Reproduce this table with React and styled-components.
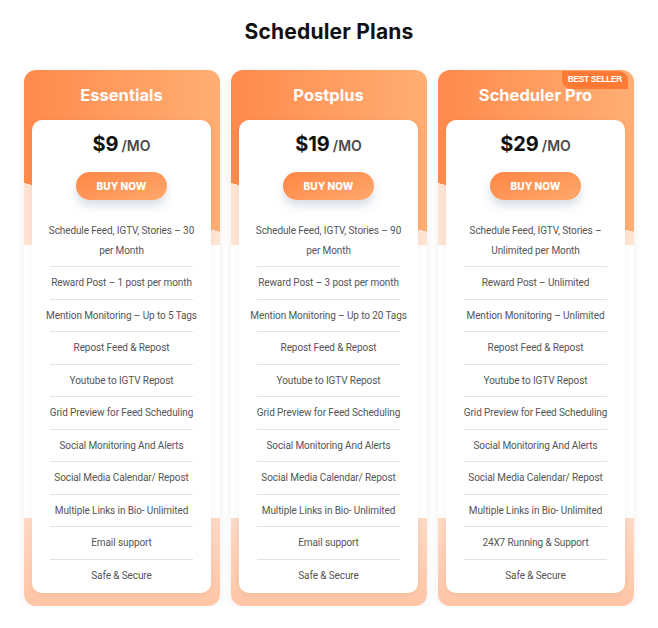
import styled, { createGlobalStyle } from 'styled-components';

const GlobalStyle = createGlobalStyle`
    body {
        margin: 0;
        background: #ffffff;
        font-family: Roboto, "Liberation Sans", sans-serif;
    }
`;

const Page = styled.div`
    width: 658px;
    padding: 18px 24px 0;
    box-sizing: border-box;
`;

const Heading = styled.h1`
    margin: 0 0 24px;
    text-align: center;
    font-family: Inter, "Noto Sans", sans-serif;
    font-size: 21px;
    font-weight: 700;
    line-height: 28px;
    color: #111;
    letter-spacing: 0.2px;
`;

const Grid = styled.div`
    display: grid;
    grid-template-columns: repeat(3, 196px);
    gap: 11px;
    align-items: start;
`;

const Card = styled.div`
    position: relative;
    display: flex;
    flex-direction: column;
    border-radius: 12px;
    overflow: hidden;
    padding: 0 9px 13px 8px;
    box-shadow: 0 2px 8px rgba(0, 0, 0, 0.07);
    background:
        linear-gradient(to bottom, transparent calc(100% - 88px), #ffd9c5 calc(100% - 88px), #ffc5a5 100%),
        linear-gradient(to bottom, transparent 0, transparent 175px, #ffffff 175px),
        linear-gradient(194deg, transparent 0, transparent 157px, #ffe3d3 157px),
        linear-gradient(to right, #ff8a4c, #ffae74);
`;

const CardTitle = styled.h2`
    margin: 0;
    height: 50px;
    display: flex;
    align-items: center;
    justify-content: center;
    font-family: Inter, "Noto Sans", sans-serif;
    font-size: 16.5px;
    font-weight: 700;
    color: #ffffff;
`;

const Badge = styled.span`
    position: absolute;
    top: 1px;
    right: 6px;
    padding: 3px 6px 4px;
    background: #ff7b35;
    border-radius: 0 9px 0 9px;
    font-family: "Liberation Sans", sans-serif;
    font-size: 8.5px;
    font-weight: 700;
    letter-spacing: -0.4px;
    color: #fff;
    line-height: 11px;
`;

const Panel = styled.div`
    background: #ffffff;
    border-radius: 10px;
    padding-top: 12px;
    display: flex;
    flex-direction: column;
    align-items: center;
    box-shadow: 0 1px 6px rgba(0, 0, 0, 0.06);
`;

const Price = styled.div`
    font-family: Inter, "Noto Sans", sans-serif;
    font-size: 20px;
    font-weight: 700;
    line-height: 24px;
    color: #111;
`;

const Per = styled.span`
    margin-left: 3px;
    font-size: 14px;
    font-weight: 600;
    color: #4a4a4a;
`;

const BuyButton = styled.button`
    margin-top: 14px;
    width: 91px;
    height: 28px;
    border: none;
    border-radius: 14px;
    background: linear-gradient(160deg, #ff8646, #ffa86c);
    box-shadow: 0 6px 10px rgba(120, 140, 170, 0.28);
    color: #fff;
    font-family: Inter, "Noto Sans", sans-serif;
    font-size: 10px;
    font-weight: 800;
    letter-spacing: 0.1px;
    cursor: pointer;
`;

const Features = styled.ul`
    list-style: none;
    margin: 15px 0 0;
    padding: 0 0 1px;
    width: 100%;
`;

const Feature = styled.li`
    padding: 6px 9px 7px;
    text-align: center;
    font-size: 10px;
    line-height: 19.5px;
    letter-spacing: -0.1px;
    color: #555;
    background: ${p => p.$last
        ? 'none'
        : 'linear-gradient(#e2e2e2, #e2e2e2) bottom center / calc(100% - 36px) 1px no-repeat'};
`;

const common = [
    'Repost Feed & Repost',
    'Youtube to IGTV Repost',
    'Grid Preview for Feed Scheduling',
    'Social Monitoring And Alerts',
    'Social Media Calendar/ Repost',
    'Multiple Links in Bio- Unlimited',
];

const plans = [
    {
        name: 'Essentials',
        price: '$9',
        features: [
            'Schedule Feed, IGTV, Stories – 30 per Month',
            'Reward Post – 1 post per month',
            'Mention Monitoring – Up to 5 Tags',
            ...common,
            'Email support',
            'Safe & Secure',
        ],
    },
    {
        name: 'Postplus',
        price: '$19',
        features: [
            'Schedule Feed, IGTV, Stories – 90 per Month',
            'Reward Post – 3 post per month',
            'Mention Monitoring – Up to 20 Tags',
            ...common,
            'Email support',
            'Safe & Secure',
        ],
    },
    {
        name: 'Scheduler Pro',
        price: '$29',
        badge: 'BEST SELLER',
        features: [
            'Schedule Feed, IGTV, Stories – Unlimited per Month',
            'Reward Post – Unlimited',
            'Mention Monitoring – Unlimited',
            ...common,
            '24X7 Running & Support',
            'Safe & Secure',
        ],
    },
];

const App = () => {
    return (
        <Page>
            <GlobalStyle />
            <Heading>Scheduler Plans</Heading>
            <Grid>
                {plans.map(plan => (
                    <Card key={plan.name}>
                        {plan.badge && <Badge>{plan.badge}</Badge>}
                        <CardTitle>{plan.name}</CardTitle>
                        <Panel>
                            <Price>
                                {plan.price}
                                <Per>/MO</Per>
                            </Price>
                            <BuyButton>BUY NOW</BuyButton>
                            <Features>
                                {plan.features.map((f, i) => (
                                    <Feature key={f} $last={i === plan.features.length - 1}>{f}</Feature>
                                ))}
                            </Features>
                        </Panel>
                    </Card>
                ))}
            </Grid>
        </Page>
    );
};

export default App;
